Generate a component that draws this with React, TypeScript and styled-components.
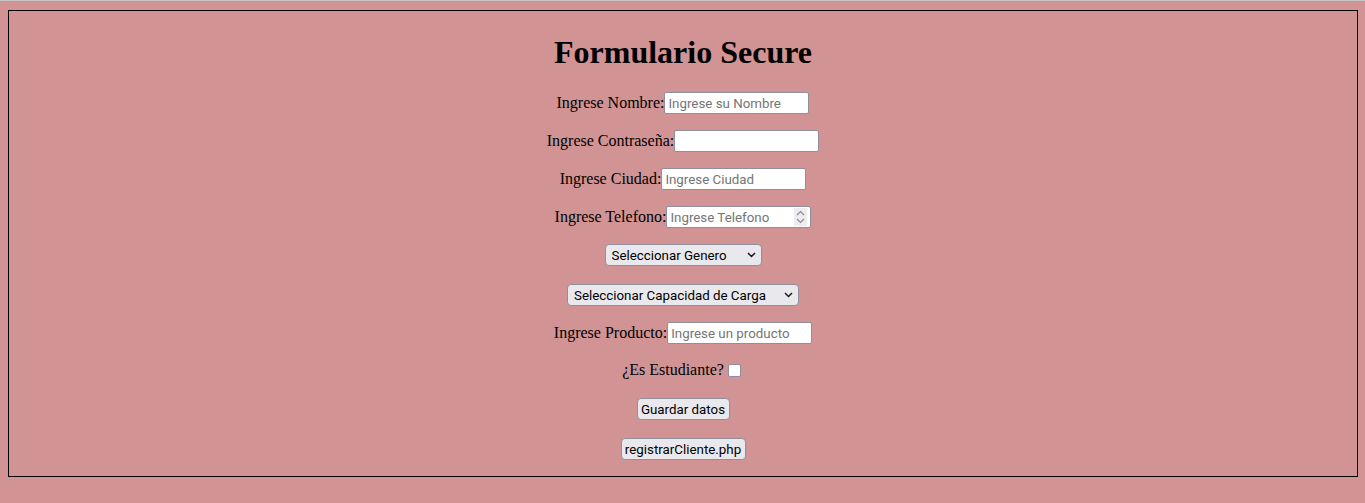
import React from "react";
import styled, { createGlobalStyle } from "styled-components";

const Global = createGlobalStyle`
  html, body { margin: 0; padding: 0; }
  body {
    background: #d19393;
    font-family: "Liberation Serif", "Times New Roman", serif;
    color: #000;
  }
`;

const TopRule = styled.div`
  height: 1px;
  background: #c6c6c6;
`;

const Panel = styled.form`
  margin: 9px 7px 0 8px;
  border: 1px solid #000;
  padding: 23px 0 16px;
  display: flex;
  flex-direction: column;
  align-items: center;
`;

const Title = styled.h1`
  margin: 0;
  font-size: 32px;
  line-height: 37px;
  font-weight: bold;
`;

const Row = styled.div<{ $gap: number }>`
  margin-top: ${(p) => p.$gap}px;
  height: 22px;
  display: flex;
  align-items: center;
  font-size: 16px;
`;

const Label = styled.label`
  line-height: 18px;
  white-space: nowrap;
`;

const controlFont = `
  font-family: Roboto, "Liberation Sans", Arial, sans-serif;
  font-size: 13.33px;
  color: #000;
`;

const TextInput = styled.input`
  ${controlFont}
  box-sizing: border-box;
  width: 145px;
  height: 22px;
  margin: 0;
  padding: 0 3px;
  border: 1px solid #8f8f9d;
  border-radius: 2px;
  background: #fff;
  outline: none;
  &::placeholder {
    color: #757575;
    opacity: 1;
  }
`;

const FieldWrap = styled.span`
  position: relative;
  display: inline-flex;
`;

const Spinner = styled.span`
  position: absolute;
  right: 4px;
  top: 2px;
  width: 13px;
  height: 18px;
  background: #ededf0;
  display: flex;
  align-items: center;
  justify-content: center;
`;

const SelectWrap = styled.span<{ $w: number }>`
  position: relative;
  display: inline-flex;
  width: ${(p) => p.$w}px;
`;

const Select = styled.select`
  ${controlFont}
  appearance: none;
  -webkit-appearance: none;
  box-sizing: border-box;
  width: 100%;
  height: 22px;
  margin: 0;
  padding: 0 20px 0 6px;
  border: 1px solid #8f8f9d;
  border-radius: 4px;
  background: #e9e9ed;
  outline: none;
`;

const Chevron = styled.svg`
  position: absolute;
  right: 6px;
  top: 8px;
  pointer-events: none;
`;

const Check = styled.input`
  appearance: none;
  -webkit-appearance: none;
  box-sizing: border-box;
  width: 13px;
  height: 13px;
  margin: 0 3px 0 4px;
  border: 1px solid #8f8f9d;
  border-radius: 2px;
  background: #fff;
`;

const Button = styled.button<{ $w: number }>`
  ${controlFont}
  box-sizing: border-box;
  width: ${(p) => p.$w}px;
  height: 22px;
  margin: 0;
  padding: 0;
  border: 1px solid #8f8f9d;
  border-radius: 4px;
  background: #e9e9ed;
  text-align: center;
  white-space: nowrap;
`;

const ChevronDown = () => (
  <Chevron width="9" height="6" viewBox="0 0 9 6">
    <path d="M1 1 L4.5 4.5 L8 1" fill="none" stroke="#1a1a1a" strokeWidth="1.5" />
  </Chevron>
);

export default function App() {
  return (
    <>
      <Global />
      <TopRule />
      <Panel onSubmit={(e) => e.preventDefault()}>
        <Title>Formulario Secure</Title>
        <Row $gap={21}>
          <Label>Ingrese Nombre:</Label>
          <TextInput type="text" placeholder="Ingrese su Nombre" />
        </Row>
        <Row $gap={16}>
          <Label>Ingrese Contraseña:</Label>
          <TextInput type="password" />
        </Row>
        <Row $gap={16}>
          <Label>Ingrese Ciudad:</Label>
          <TextInput type="text" placeholder="Ingrese Ciudad" />
        </Row>
        <Row $gap={16}>
          <Label>Ingrese Telefono:</Label>
          <FieldWrap>
            <TextInput type="text" inputMode="numeric" placeholder="Ingrese Telefono" />
            <Spinner>
              <svg width="9" height="14" viewBox="0 0 9 14">
                <path d="M1 5 L4.5 1.5 L8 5" fill="none" stroke="#8a8a96" strokeWidth="1.2" />
                <path d="M1 9 L4.5 12.5 L8 9" fill="none" stroke="#8a8a96" strokeWidth="1.2" />
              </svg>
            </Spinner>
          </FieldWrap>
        </Row>
        <Row $gap={16}>
          <SelectWrap $w={157}>
            <Select defaultValue="">
              <option value="">Seleccionar Genero</option>
              <option value="m">Masculino</option>
              <option value="f">Femenino</option>
            </Select>
            <ChevronDown />
          </SelectWrap>
        </Row>
        <Row $gap={18}>
          <SelectWrap $w={232}>
            <Select defaultValue="">
              <option value="">Seleccionar Capacidad de Carga</option>
            </Select>
            <ChevronDown />
          </SelectWrap>
        </Row>
        <Row $gap={16}>
          <Label>Ingrese Producto:</Label>
          <TextInput type="text" placeholder="Ingrese un producto" />
        </Row>
        <Row $gap={15}>
          <Label>¿Es Estudiante?</Label>
          <Check type="checkbox" />
        </Row>
        <Row $gap={17}>
          <Button type="button" $w={93}>Guardar datos</Button>
        </Row>
        <Row $gap={18}>
          <Button type="submit" $w={125}>registrarCliente.php</Button>
        </Row>
      </Panel>
    </>
  );
}
